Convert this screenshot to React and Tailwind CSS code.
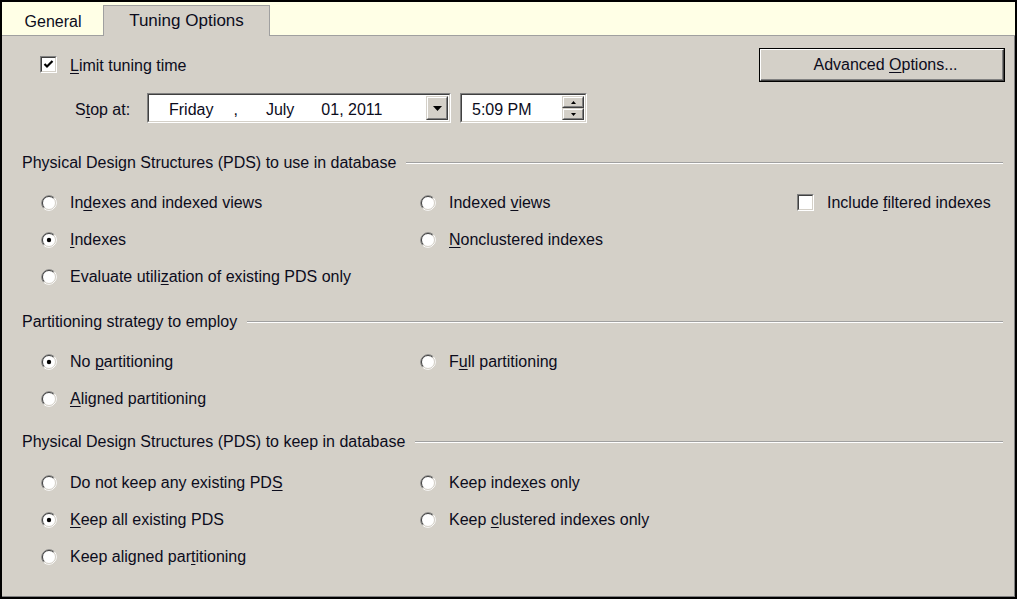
import React from "react";

const ink = "text-[#0c0c1c]";

function U({ children }) {
  return <span className="underline underline-offset-[2px] decoration-[1px]">{children}</span>;
}

function Radio({ checked }) {
  return (
    <svg width="16" height="16" viewBox="0 0 16 16" className="shrink-0">
      <circle cx="8" cy="8" r="6.5" fill="#ffffff" />
      <path d="M2.7 13.3 A7.5 7.5 0 0 1 13.3 2.7" stroke="#808080" strokeWidth="1" fill="none" />
      <path d="M3.4 12.6 A6.5 6.5 0 0 1 12.6 3.4" stroke="#404040" strokeWidth="1" fill="none" />
      <path d="M13.3 2.7 A7.5 7.5 0 0 1 2.7 13.3" stroke="#ffffff" strokeWidth="1" fill="none" />
      <path d="M12.6 3.4 A6.5 6.5 0 0 1 3.4 12.6" stroke="#d4d0c8" strokeWidth="1" fill="none" />
      {checked && <circle cx="8" cy="8" r="2.2" fill="#000000" />}
    </svg>
  );
}

function Check({ checked }) {
  return (
    <div className="w-[17px] h-[17px] shrink-0 border-t border-l border-[#808080] border-b-white border-r-white border-b border-r">
      <div className="w-full h-full bg-white border-t border-l border-[#404040] border-b border-r border-b-[#d4d0c8] border-r-[#d4d0c8] flex items-center justify-center">
        {checked && (
          <svg width="11" height="11" viewBox="0 0 11 11">
            <path d="M1.5 5 L4 7.5 L9.5 2" stroke="#000" strokeWidth="2.2" fill="none" />
          </svg>
        )}
      </div>
    </div>
  );
}

function Option({ checked, children }) {
  return (
    <div className="flex items-center gap-[13px] h-[37px]">
      <Radio checked={checked} />
      <span className={ink}>{children}</span>
    </div>
  );
}

function Header({ children }) {
  return (
    <div className="flex items-center h-[18px] pl-[20px] pr-[11px] gap-[10px]">
      <span className={`${ink} whitespace-nowrap`}>{children}</span>
      <div className="flex-1 border-t border-[#a0a0a0] border-b border-b-white" />
    </div>
  );
}

function RaisedBtn({ className, children }) {
  return (
    <div className={`border-t border-l border-[#d4d0c8] border-b border-r border-b-[#404040] border-r-[#404040] bg-[#d4d0c8] ${className}`}>
      <div className="w-full h-full border-t border-l border-white border-b border-r border-b-[#808080] border-r-[#808080] flex items-center justify-center">
        {children}
      </div>
    </div>
  );
}

function Sunken({ className, children }) {
  return (
    <div className={`border-t border-l border-[#808080] border-b border-r border-b-white border-r-white ${className}`}>
      <div className="w-full h-full bg-white border-t border-l border-[#404040] border-b border-r border-b-[#d4d0c8] border-r-[#d4d0c8] flex items-center">
        {children}
      </div>
    </div>
  );
}

export default function App() {
  return (
    <div
      className="w-[1017px] h-[599px] border-2 border-black bg-[#d4d0c8] flex flex-col text-[16px] leading-none"
      style={{ fontFamily: '"Liberation Sans", Arial, sans-serif' }}
    >
      {/* Tab strip */}
      <div className="h-[34px] shrink-0 bg-[#ffffe6] border-b border-[#a0a0a0] flex items-end pl-px">
        <div className={`w-[100px] h-[30px] flex items-center justify-center pt-[3px] ${ink}`}>General</div>
        <div className={`w-[167px] h-[31px] -mb-px bg-[#d4d0c8] border-t border-l border-r border-[#a0a0a0] flex items-center justify-center pb-[2px] text-[17px] ${ink}`}>
          Tuning Options
        </div>
      </div>

      {/* Panel */}
      <div className="flex-1 border-r border-b border-[#808080] flex flex-col">
        <div className="flex items-start justify-between pt-[12px] pr-[9px]">
          <div className="flex items-center gap-[13px] pl-[38px] mt-[7px]">
            <Check checked />
            <span className={`pt-[3px] ${ink}`}>
              <U>L</U>imit tuning time
            </span>
          </div>
          <div className="w-[246px] h-[34px] border border-black">
            <div className="w-full h-full border-t border-l border-white border-b border-r border-b-[#404040] border-r-[#404040]">
              <div className={`w-full h-full border-b border-r border-[#808080] flex items-center justify-center pl-[8px] ${ink}`}>
                Advanced&nbsp;<U>O</U>ptions...
              </div>
            </div>
          </div>
        </div>

        <div className="flex items-center mt-[11px] pl-[73px] h-[30px]">
          <span className={`w-[72px] pt-[3px] ${ink}`}>
            S<U>t</U>op at:
          </span>
          <Sunken className="w-[304px] h-[30px]">
            <div className={`flex-1 flex items-center pt-[3px] ${ink}`}>
              <span className="ml-[20px]">Friday</span>
              <span className="ml-[20px]">,</span>
              <span className="ml-[28px]">July</span>
              <span className="ml-[27px]">01, 2011</span>
            </div>
            <RaisedBtn className="w-[22px] h-[24px] mr-px">
              <svg width="9" height="5" viewBox="0 0 9 5">
                <path d="M0 0 H9 L4.5 5 Z" fill="#000" />
              </svg>
            </RaisedBtn>
          </Sunken>
          <Sunken className="w-[127px] h-[30px] ml-[9px]">
            <div className={`flex-1 pl-[10px] pt-[3px] ${ink}`}>5:09 PM</div>
            <div className="flex flex-col mr-px">
              <RaisedBtn className="w-[22px] h-[12px]">
                <svg width="5" height="3" viewBox="0 0 5 3">
                  <path d="M0 3 H5 L2.5 0 Z" fill="#000" />
                </svg>
              </RaisedBtn>
              <RaisedBtn className="w-[22px] h-[12px]">
                <svg width="5" height="3" viewBox="0 0 5 3">
                  <path d="M0 0 H5 L2.5 3 Z" fill="#000" />
                </svg>
              </RaisedBtn>
            </div>
          </Sunken>
        </div>

        <div className="mt-[31px]">
          <Header>Physical Design Structures (PDS) to use in database</Header>
        </div>
        <div className="grid grid-cols-[379px_377px_auto] pl-[39px] mt-[12px]">
          <Option>In<U>d</U>exes and indexed views</Option>
          <Option>Indexed <U>v</U>iews</Option>
          <div className="flex items-center gap-[13px] h-[37px]">
            <Check />
            <span className={ink}>
              Include <U>f</U>iltered indexes
            </span>
          </div>
          <Option checked>
            <U>I</U>ndexes
          </Option>
          <Option>
            <U>N</U>onclustered indexes
          </Option>
          <div />
          <Option>
            Evaluate utili<U>z</U>ation of existing PDS only
          </Option>
        </div>

        <div className="mt-[18px]">
          <Header>Partitioning strategy to employ</Header>
        </div>
        <div className="grid grid-cols-[379px_377px_auto] pl-[39px] mt-[12px]">
          <Option checked>
            No <U>p</U>artitioning
          </Option>
          <Option>
            F<U>u</U>ll partitioning
          </Option>
          <div />
          <Option>
            <U>A</U>ligned partitioning
          </Option>
        </div>

        <div className="mt-[16px]">
          <Header>Physical Design Structures (PDS) to keep in database</Header>
        </div>
        <div className="grid grid-cols-[379px_377px_auto] pl-[39px] mt-[13px]">
          <Option>
            Do not keep any existing PD<U>S</U>
          </Option>
          <Option>
            Keep inde<U>x</U>es only
          </Option>
          <div />
          <Option checked>
            <U>K</U>eep all existing PDS
          </Option>
          <Option>
            Keep <U>c</U>lustered indexes only
          </Option>
          <div />
          <Option>
            Keep aligned par<U>t</U>itioning
          </Option>
        </div>
      </div>
    </div>
  );
}
